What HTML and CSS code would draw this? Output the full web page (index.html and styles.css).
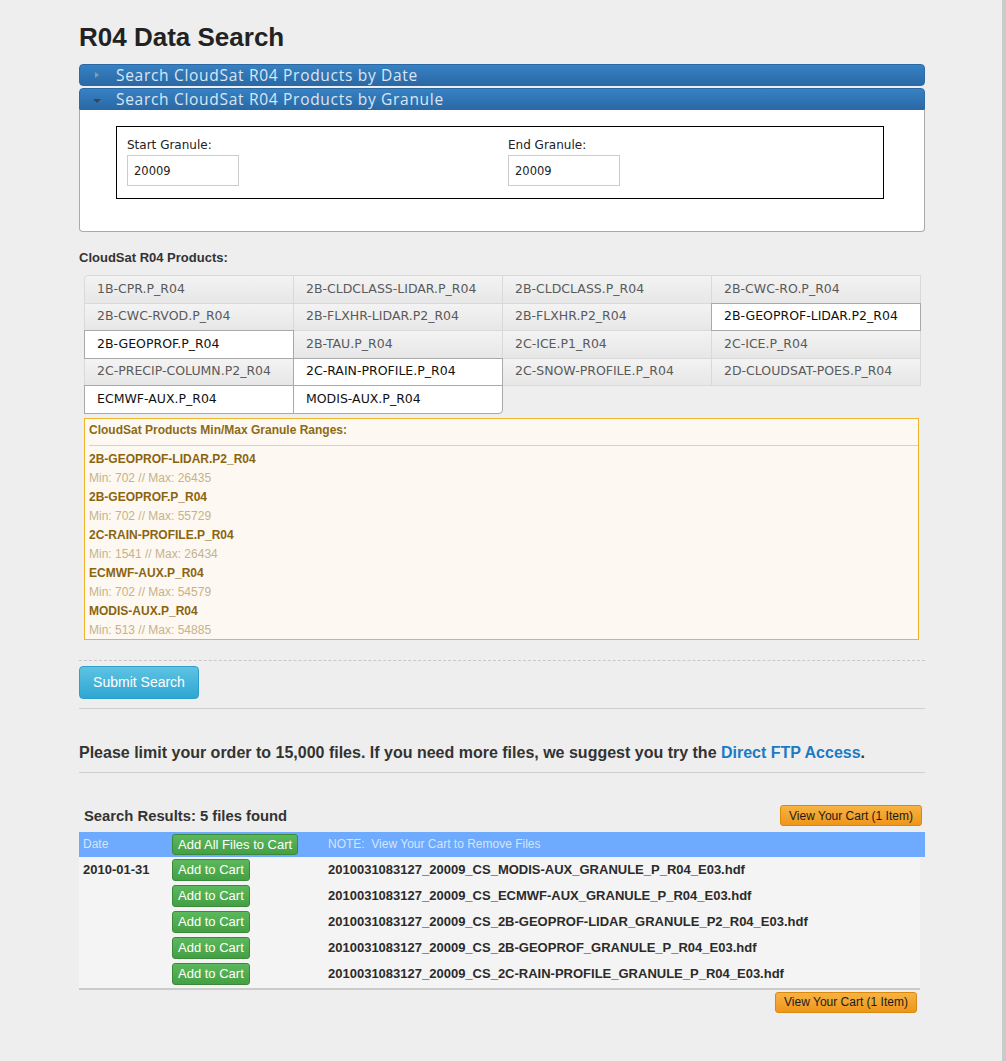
FILE: index.html
```html
<!DOCTYPE html>
<html>
<head>
<meta charset="utf-8">
<title>R04 Data Search</title>
<link rel="stylesheet" href="styles.css">
</head>
<body>
<div class="page">
  <div class="container">
    <h1 class="title">R04 Data Search</h1>

    <div class="acc-head acc-closed"><span class="arrow-right"></span>Search CloudSat R04 Products by Date</div>
    <div class="acc-head acc-open"><span class="arrow-down"></span>Search CloudSat R04 Products by Granule</div>
    <div class="acc-panel">
      <div class="granule-box">
        <div class="field">
          <label class="field-label">Start Granule:</label>
          <input class="field-input" type="text" value="20009">
        </div>
        <div class="field">
          <label class="field-label">End Granule:</label>
          <input class="field-input" type="text" value="20009">
        </div>
      </div>
    </div>

    <div class="section-label">CloudSat R04 Products:</div>
    <div class="products">
      <div class="prod first">1B-CPR.P_R04</div>
      <div class="prod">2B-CLDCLASS-LIDAR.P_R04</div>
      <div class="prod">2B-CLDCLASS.P_R04</div>
      <div class="prod">2B-CWC-RO.P_R04</div>
      <div class="prod">2B-CWC-RVOD.P_R04</div>
      <div class="prod">2B-FLXHR-LIDAR.P2_R04</div>
      <div class="prod">2B-FLXHR.P2_R04</div>
      <div class="prod sel">2B-GEOPROF-LIDAR.P2_R04</div>
      <div class="prod sel">2B-GEOPROF.P_R04</div>
      <div class="prod">2B-TAU.P_R04</div>
      <div class="prod">2C-ICE.P1_R04</div>
      <div class="prod">2C-ICE.P_R04</div>
      <div class="prod">2C-PRECIP-COLUMN.P2_R04</div>
      <div class="prod sel">2C-RAIN-PROFILE.P_R04</div>
      <div class="prod">2C-SNOW-PROFILE.P_R04</div>
      <div class="prod">2D-CLOUDSAT-POES.P_R04</div>
      <div class="prod sel">ECMWF-AUX.P_R04</div>
      <div class="prod sel last">MODIS-AUX.P_R04</div>
    </div>

    <div class="ranges">
      <div class="ranges-head">CloudSat Products Min/Max Granule Ranges:</div>
      <div class="ranges-rule"></div>
      <div class="ranges-list">
        <div class="r-name">2B-GEOPROF-LIDAR.P2_R04</div>
        <div class="r-val">Min: 702 // Max: 26435</div>
        <div class="r-name">2B-GEOPROF.P_R04</div>
        <div class="r-val">Min: 702 // Max: 55729</div>
        <div class="r-name">2C-RAIN-PROFILE.P_R04</div>
        <div class="r-val">Min: 1541 // Max: 26434</div>
        <div class="r-name">ECMWF-AUX.P_R04</div>
        <div class="r-val">Min: 702 // Max: 54579</div>
        <div class="r-name">MODIS-AUX.P_R04</div>
        <div class="r-val">Min: 513 // Max: 54885</div>
      </div>
    </div>

    <div class="submit-row">
      <button class="btn-submit">Submit Search</button>
    </div>

    <p class="limit">Please limit your order to 15,000 files. If you need more files, we suggest you try the <a class="link" href="#">Direct FTP Access</a>.</p>

    <div class="results">
      <div class="results-top">
        <span class="results-title">Search Results: 5 files found</span>
        <button class="btn-cart">View Your Cart (1 Item)</button>
      </div>
      <div class="thead">
        <div class="c-date">Date</div>
        <div class="c-btn"><button class="btn-green">Add All Files to Cart</button></div>
        <div class="c-file">NOTE:&nbsp; View Your Cart to Remove Files</div>
      </div>
      <div class="tbody">
        <div class="trow">
          <div class="c-date bold">2010-01-31</div>
          <div class="c-btn"><button class="btn-green">Add to Cart</button></div>
          <div class="c-file bold">2010031083127_20009_CS_MODIS-AUX_GRANULE_P_R04_E03.hdf</div>
        </div>
        <div class="trow">
          <div class="c-date"></div>
          <div class="c-btn"><button class="btn-green">Add to Cart</button></div>
          <div class="c-file bold">2010031083127_20009_CS_ECMWF-AUX_GRANULE_P_R04_E03.hdf</div>
        </div>
        <div class="trow">
          <div class="c-date"></div>
          <div class="c-btn"><button class="btn-green">Add to Cart</button></div>
          <div class="c-file bold">2010031083127_20009_CS_2B-GEOPROF-LIDAR_GRANULE_P2_R04_E03.hdf</div>
        </div>
        <div class="trow">
          <div class="c-date"></div>
          <div class="c-btn"><button class="btn-green">Add to Cart</button></div>
          <div class="c-file bold">2010031083127_20009_CS_2B-GEOPROF_GRANULE_P_R04_E03.hdf</div>
        </div>
        <div class="trow">
          <div class="c-date"></div>
          <div class="c-btn"><button class="btn-green">Add to Cart</button></div>
          <div class="c-file bold">2010031083127_20009_CS_2C-RAIN-PROFILE_GRANULE_P_R04_E03.hdf</div>
        </div>
      </div>
      <div class="results-bottom">
        <button class="btn-cart">View Your Cart (1 Item)</button>
      </div>
    </div>
  </div>
</div>
</body>
</html>
```

FILE: styles.css
```css
html, body {
  margin: 0;
  padding: 0;
  background: #eeeeee;
}
body {
  font-family: "Liberation Sans", Arial, sans-serif;
  color: #333;
}
.page {
  width: 1002px;
  min-height: 1061px;
  border-right: 4px solid #cacaca;
}
.container {
  width: 846px;
  margin-left: 79px;
  padding-top: 21px;
}
.title {
  margin: 0 0 11px 0;
  font-size: 26px;
  line-height: 32px;
  font-weight: bold;
  color: #222;
}

/* accordion */
.acc-head {
  height: 22px;
  line-height: 21px;
  background: linear-gradient(to bottom, #3781c3, #2a69a6);
  color: #dbe6f2;
  font-family: "Open Sans", sans-serif;
  font-size: 15.5px;
  letter-spacing: 0.7px;
  padding-left: 36px;
  position: relative;
  border: 1px solid #2c6aa5;
  box-sizing: border-box;
}
.acc-closed {
  border-radius: 4px;
  margin-bottom: 2px;
}
.acc-open {
  border-radius: 4px 4px 0 0;
}
.arrow-right {
  position: absolute;
  left: 15px;
  top: 7px;
  width: 0;
  height: 0;
  border-top: 3.5px solid transparent;
  border-bottom: 3.5px solid transparent;
  border-left: 4px solid #8b9aa8;
}
.arrow-down {
  position: absolute;
  left: 13px;
  top: 10px;
  width: 0;
  height: 0;
  border-left: 4px solid transparent;
  border-right: 4px solid transparent;
  border-top: 4px solid #3c4450;
}
.acc-panel {
  background: #fff;
  border: 1px solid #aaaaaa;
  border-top: none;
  border-radius: 0 0 4px 4px;
  padding: 16px 40px 32px 36px;
}
.granule-box {
  border: 1px solid #000;
  display: grid;
  grid-template-columns: 381px 1fr;
  padding: 11px 10px 10px 10px;
  height: 73px;
  box-sizing: border-box;
}
.field-label {
  display: block;
  font-family: "DejaVu Sans", Verdana, sans-serif;
  font-size: 12px;
  line-height: 15px;
  color: #222;
  margin-bottom: 2px;
}
.field-input {
  width: 112px;
  height: 31px;
  box-sizing: border-box;
  border: 1px solid #cccccc;
  padding: 0 6px;
  font-family: "DejaVu Sans", Verdana, sans-serif;
  font-size: 11.5px;
  color: #222;
  background: #fff;
  outline: none;
}

/* products */
.section-label {
  margin-top: 18px;
  font-size: 13px;
  font-weight: bold;
  line-height: 16px;
  color: #333;
}
.products {
  margin: 9px 0 0 5px;
  width: 837px;
  display: grid;
  grid-template-columns: repeat(4, 209px);
  grid-auto-rows: 27.5px;
}
.prod {
  margin: 0 -1px -1px 0;
  border: 1px solid #d9d9d9;
  background: linear-gradient(to bottom, #f3f3f3, #e7e7e7);
  font-family: "DejaVu Sans", Verdana, sans-serif;
  font-size: 12.5px;
  color: #5a5a5a;
  padding: 0 0 2px 12px;
  display: flex;
  align-items: center;
}
.prod.first {
  border-top-left-radius: 4px;
}
.prod.sel {
  background: #fff;
  color: #111;
  border-color: #a9a9a9;
  position: relative;
  z-index: 1;
}
.prod.last {
  border-bottom-right-radius: 4px;
}

/* ranges */
.ranges {
  margin: 5px 0 0 5px;
  width: 835px;
  box-sizing: border-box;
  border: 1px solid #eeb42a;
  background: #fdf9f2;
  padding: 0 0 0 4px;
  height: 222px;
}
.ranges-head {
  padding-top: 3px;
  font-size: 12px;
  font-weight: bold;
  line-height: 16px;
  color: #8d6a15;
}
.ranges-rule {
  margin-top: 7px;
  border-top: 1px solid #d2d2d2;
}
.ranges-list {
  padding-top: 4px;
}
.r-name {
  font-size: 12px;
  line-height: 19px;
  font-weight: bold;
  color: #8a6410;
}
.r-val {
  font-size: 12px;
  line-height: 19px;
  color: #c6b28b;
}

/* submit */
.submit-row {
  margin-top: 20px;
  border-top: 1px dashed #c8c8c8;
  padding: 5px 0 9px 0;
  border-bottom: 1px solid #cfcfcf;
}
.btn-submit {
  width: 120px;
  height: 33px;
  border: 1px solid #2aa0cb;
  border-radius: 4px;
  background: linear-gradient(to bottom, #5ec3e2, #2ea6d3);
  color: #fff;
  font-family: "Liberation Sans", Arial, sans-serif;
  font-size: 14px;
  padding: 0;
  display: block;
}

.limit {
  margin: 0;
  padding: 34px 0 9px 0;
  font-size: 16px;
  font-weight: bold;
  line-height: 20px;
  color: #333;
  border-bottom: 1px solid #cfcfcf;
}
.link {
  color: #1b7ac6;
  text-decoration: none;
}

/* results */
.results {
  margin-top: 32px;
}
.results-top {
  display: flex;
  justify-content: space-between;
  align-items: center;
  padding: 0 3px 0 5px;
  height: 22px;
  margin-bottom: 5px;
}
.results-title {
  font-size: 14.8px;
  font-weight: bold;
  color: #333;
}
.btn-cart {
  height: 21px;
  width: 142px;
  padding: 0;
  border: 1px solid #d9890e;
  border-radius: 3px;
  background: linear-gradient(to bottom, #f7b344, #ee9619);
  color: #1c1c1c;
  font-family: "Liberation Sans", Arial, sans-serif;
  font-size: 12px;
}
.thead {
  display: flex;
  align-items: center;
  height: 25px;
  background: #6eaafd;
  color: #d4e4ff;
  font-size: 12px;
}
.c-date {
  width: 93px;
  padding-left: 4px;
  box-sizing: border-box;
}
.c-btn {
  width: 156px;
}
.c-file {
  flex: 1;
}
.tbody {
  width: 841px;
  background: #f4f4f4;
  border-bottom: 2px solid #cbcbcb;
  padding-bottom: 1px;
}
.trow {
  display: flex;
  align-items: center;
  height: 26px;
  font-size: 13px;
  color: #2b2b2b;
}
.bold {
  font-weight: bold;
}
.btn-green {
  height: 22px;
  padding: 0 5px;
  border: 1px solid #3b8a3b;
  border-radius: 3px;
  background: linear-gradient(to bottom, #5cb85c, #45a045);
  color: #fff;
  font-family: "Liberation Sans", Arial, sans-serif;
  font-size: 13px;
  display: block;
}
.thead .btn-green {
  height: 21px;
}
.results-bottom {
  width: 841px;
  display: flex;
  justify-content: flex-end;
  padding: 2px 3px 0 0;
  box-sizing: border-box;
}
```
